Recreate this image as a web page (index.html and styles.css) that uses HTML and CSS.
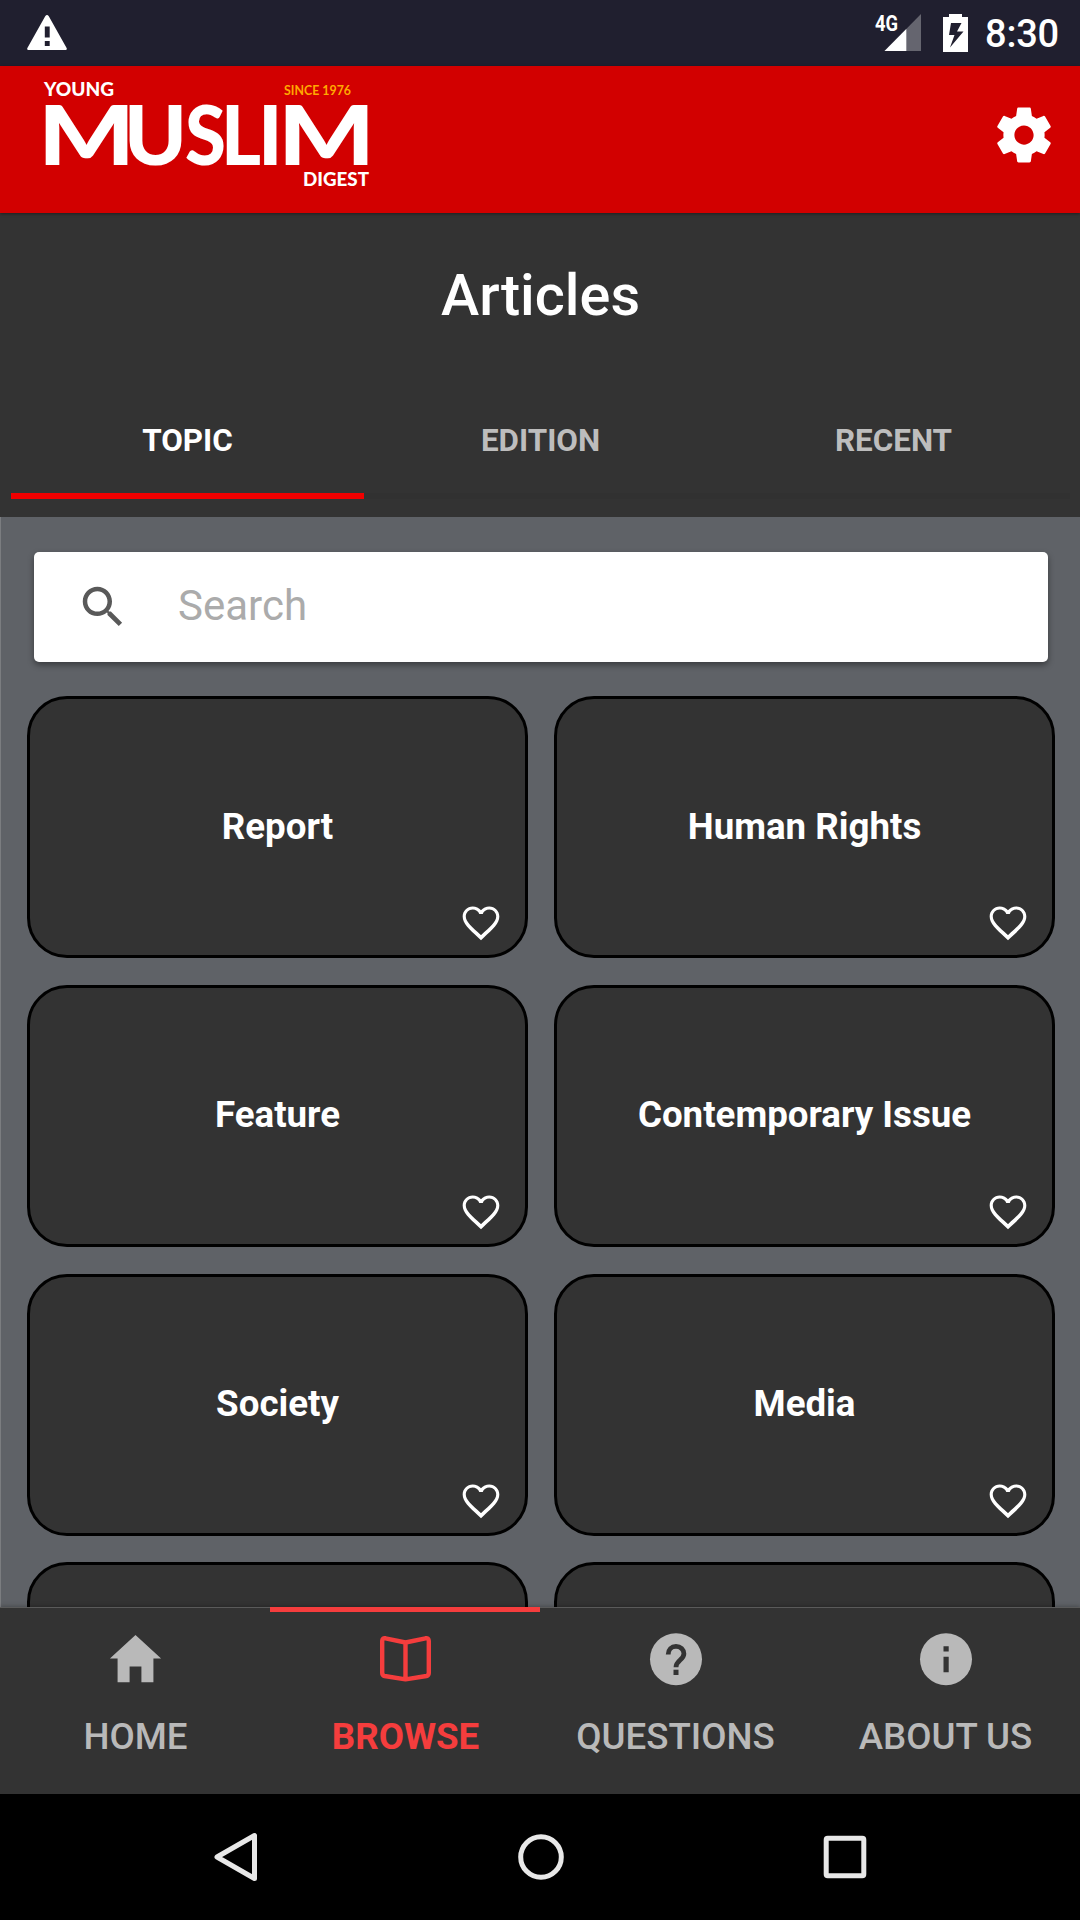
FILE: index.html
```html
<!DOCTYPE html>
<html lang="en">
<head>
<meta charset="utf-8">
<title>Young Muslim Digest</title>
<link rel="stylesheet" href="styles.css">
</head>
<body>
<svg class="defs" aria-hidden="true">
  <symbol id="heart" viewBox="0 0 24 24"><path d="M16.5 3c-1.74 0-3.41.81-4.5 2.09C10.91 3.81 9.24 3 7.5 3 4.42 3 2 5.42 2 8.5c0 3.78 3.4 6.86 8.55 11.54L12 21.35l1.45-1.32C18.6 15.36 22 12.28 22 8.5 22 5.42 19.58 3 16.5 3zm-4.4 15.55l-.1.1-.1-.1C7.14 14.24 3.7 11.39 3.7 8.5c0-2 1.6-3.8 3.8-3.8 1.54 0 3.04.99 3.57 2.36h1.87C13.46 5.69 14.96 4.7 16.5 4.7c2.2 0 3.8 1.8 3.8 3.8 0 2.89-3.44 5.74-8.2 10.05z"/></symbol>
</svg>
<div class="screen">
  <div class="status">
    <svg class="warn" width="40" height="36" viewBox="0 0 40 36"><path fill="#fff" fill-rule="evenodd" d="M18.200 1.300Q20-1.300 21.800 1.300L39.600 33Q40.400 35 38.500 35H1.500Q-.4 35 .4 33ZM17.800 11.500V22.500H22.700V11.500ZM17.800 26V31H22.700V26Z"/></svg>
    <div class="status-right">
      <svg class="signal" width="46" height="38" viewBox="0 0 46 38"><path fill="#65656f" d="M46 0V37H9.500Z"/><path fill="#fff" d="M31.300 15V37H9.500Z"/><text class="net" x="0" y="17" textLength="23" lengthAdjust="spacingAndGlyphs">4G</text></svg>
      <svg width="25" height="38" viewBox="0 0 25 38"><path fill="#fff" fill-rule="evenodd" d="M6 0H19V3H25V38H0V3H6ZM8 9L6 21H11.500L7 33.500L20.500 17.500H14L18.500 9Z"/></svg>
      <span class="time">8:30</span>
    </div>
  </div>
  <header class="appbar">
    <svg class="logo" width="340" height="120" viewBox="0 0 340 120">
      <text class="logo-small" x="0" y="22" textLength="70" lengthAdjust="spacingAndGlyphs">YOUNG</text>
      <text class="logo-since" x="240" y="20.500" textLength="67" lengthAdjust="spacingAndGlyphs">SINCE 1976</text>
      <text class="logo-big" y="90.500"><tspan x="-6" textLength="97" lengthAdjust="spacingAndGlyphs">M</tspan><tspan x="80" textLength="63" lengthAdjust="spacingAndGlyphs">U</tspan><tspan x="141" textLength="41" lengthAdjust="spacingAndGlyphs">S</tspan><tspan x="177" textLength="40" lengthAdjust="spacingAndGlyphs">L</tspan><tspan x="214">I</tspan><tspan x="234" textLength="97" lengthAdjust="spacingAndGlyphs">M</tspan></text>
      <text class="logo-small" x="259" y="112" textLength="66" lengthAdjust="spacingAndGlyphs">DIGEST</text>
    </svg>
    <svg class="gear" width="66" height="66" viewBox="0 0 24 24"><path fill="#fff" d="M19.430 12.980c.04-.32.070-.64.070-.98s-.03-.66-.07-.98l2.110-1.650c.19-.15.240-.42.120-.64l-2-3.460c-.12-.22-.39-.3-.61-.22l-2.490 1c-.52-.4-1.080-.73-1.690-.98l-.38-2.650C14.460 2.180 14.250 2 14 2h-4c-.25 0-.46.180-.49.420l-.38 2.650c-.61.250-1.170.59-1.690.98l-2.490-1c-.23-.09-.49 0-.61.220l-2 3.460c-.13.220-.07.490.120.640l2.110 1.650c-.04.320-.07.650-.07.980s.03.660.070.980l-2.110 1.650c-.19.150-.24.420-.12.640l2 3.460c.12.220.39.300.610.220l2.490-1c.52.400 1.080.730 1.690.980l.38 2.650c.03.240.240.420.490.420h4c.25 0 .46-.18.490-.42l.38-2.650c.61-.25 1.170-.59 1.690-.98l2.490 1c.23.090.49 0 .61-.22l2-3.460c.12-.22.070-.49-.12-.64l-2.110-1.650zM12 15.500c-1.930 0-3.500-1.570-3.500-3.500s1.570-3.500 3.500-3.500 3.500 1.570 3.500 3.500-1.570 3.500-3.500 3.500z"/></svg>
  </header>
  <div class="titlebar">
    <h1>Articles</h1>
    <div class="tabs"><div class="tab on">TOPIC</div><div class="tab">EDITION</div><div class="tab">RECENT</div></div>
  </div>
  <main class="content">
    <div class="search">
      <svg width="54" height="54" viewBox="0 0 24 24"><path fill="#595959" d="M15.500 14h-.79l-.28-.27C15.410 12.590 16 11.110 16 9.500 16 5.910 13.090 3 9.500 3S3 5.910 3 9.500 5.910 16 9.500 16c1.610 0 3.090-.59 4.230-1.570l.27.280v.79l5 4.990L20.490 19l-4.990-5zm-6 0C7.010 14 5 11.990 5 9.500S7.010 5 9.500 5 14 7.010 14 9.500 11.990 14 9.500 14z"/></svg>
      <span>Search</span>
    </div>
    <div class="grid">
      <div class="card">Report<svg class="heart"><use href="#heart"/></svg></div>
      <div class="card">Human Rights<svg class="heart"><use href="#heart"/></svg></div>
      <div class="card">Feature<svg class="heart"><use href="#heart"/></svg></div>
      <div class="card">Contemporary Issue<svg class="heart"><use href="#heart"/></svg></div>
      <div class="card">Society<svg class="heart"><use href="#heart"/></svg></div>
      <div class="card">Media<svg class="heart"><use href="#heart"/></svg></div>
      <div class="card"></div>
      <div class="card"></div>
    </div>
  </main>
  <nav class="nav">
    <div class="item"><svg width="63" height="63" viewBox="0 0 512 512"><path fill="currentColor" d="M208 440V312h96v128h97.600V248H464L256 56 48 248h62.400v192z"/></svg><span>HOME</span></div>
    <div class="item on"><svg width="63" height="63" viewBox="0 1 63 63"><path fill="none" stroke="currentColor" stroke-width="4.400" stroke-linejoin="round" d="M31.500 15.500L11.500 11.300Q8.200 10.800 8.200 14V46Q8.200 48.400 10.500 49L31.500 52.300L52.500 49Q54.800 48.400 54.800 46V14Q54.800 10.800 51.500 11.300L31.500 15.500V52.300"/></svg><span>BROWSE</span></div>
    <div class="item"><svg width="63" height="63" viewBox="0 0 63 63"><circle cx="32" cy="31.200" r="26" fill="currentColor"/><path fill="none" stroke="#333" stroke-width="4.800" d="M24.200 26.500C24.200 21.600 27.500 18.400 32 18.400S39.900 21.600 39.900 25.800C39.900 31.800 32 32.500 32 39.300"/><path fill="#333" d="M29.500 41.700h5v5.300h-5z"/></svg><span>QUESTIONS</span></div>
    <div class="item"><svg width="63" height="63" viewBox="0 0 63 63"><circle cx="32" cy="31.200" r="26" fill="currentColor"/><path fill="#333" d="M29.500 18.200h5.200v5.200h-5.200zM29.500 28.700h5.200v15.500h-5.200z"/></svg><span>ABOUT US</span></div>
  </nav>
  <div class="sysnav">
    <svg width="54" height="54" viewBox="0 0 54 54"><path d="M45.500 5.500V48.500L8 27Z"/></svg>
    <svg width="54" height="54" viewBox="0 0 54 54"><circle cx="27" cy="27" r="20.300"/></svg>
    <svg width="54" height="54" viewBox="0 0 54 54"><rect x="8.200" y="8.200" width="37.600" height="37.600" rx="1.500"/></svg>
  </div>
</div>
</body>
</html>
```
FILE: styles.css
```css
* { box-sizing: border-box; }
body { margin: 0; font-family: Roboto, "Liberation Sans", sans-serif; background: #000; }
.defs { display: none; }
svg { display: block; flex: none; }
.screen { width: 1080px; height: 1920px; display: flex; flex-direction: column; overflow: hidden; color: #fff; }

.status { height: 66px; flex: none; background: #201f2f; display: flex; justify-content: space-between; align-items: flex-start; padding: 14px 21px 0 27px; }
.warn { margin-top: 1px; }
.status-right { display: flex; gap: 22px; }
.signal { overflow: visible; }
.net { font: 700 22px Roboto, sans-serif; fill: #fff; }
.time { font-size: 38px; font-weight: 500; line-height: 40px; letter-spacing: -.2px; margin-left: -5px; }

.appbar { height: 147px; flex: none; background: #d20000; display: flex; justify-content: space-between; align-items: flex-start; padding: 8px 23px 0 44px; position: relative; box-shadow: 0 1px 3px rgba(0,0,0,.4); }
.logo { overflow: visible; }
.logo-small { font: 900 18px Lato, sans-serif; fill: #fff; }
.logo-since { font: 700 12.500px Lato, sans-serif; fill: #ffa800; }
.logo-big { font: 900 81px Lato, sans-serif; fill: #fff; }
.gear { margin-top: 28px; }

.titlebar { height: 304px; flex: none; background: #333; padding: 0 10px 0 11px; display: flex; flex-direction: column; }
h1 { margin: 0; font-size: 57.600px; font-weight: 500; line-height: 60px; padding-top: 53px; text-align: center; }
.tabs { display: flex; margin-top: 55px; }
.tab { flex: 1; height: 118px; text-align: center; line-height: 120px; font-size: 31.400px; font-weight: 700; color: #bdbdbd; border-bottom: 6px solid #313131; }
.tab.on { color: #fff; border-color: #f00000; }

.content { flex: 1; min-height: 0; overflow: hidden; background: #5f6267; border-left: 1px solid #7b7d80; padding: 35px 25px 0 26px; }
.search { height: 110px; margin: 0 7px; background: #fff; border-radius: 5px; display: flex; align-items: center; padding-left: 42px; gap: 48px; box-shadow: 0 3px 6px rgba(0,0,0,.4); color: #ababab; font-size: 42px; }
.search span { padding-bottom: 3px; }
.grid { display: grid; grid-template-columns: 1fr 1fr; column-gap: 26px; row-gap: 26.800px; grid-auto-rows: 262px; margin-top: 34px; }
.card { background: #333; border: 3px solid #000; border-radius: 40px; display: flex; align-items: center; justify-content: center; padding-bottom: 2px; font-size: 36.700px; font-weight: 700; position: relative; }
.heart { position: absolute; right: 22.500px; bottom: 10px; width: 44px; height: 44px; fill: #fff; }

.nav { height: 187px; flex: none; background: #333; border-top: 1px solid #5a5a5a; display: flex; position: relative; box-shadow: 0 -1px 4px rgba(0,0,0,.25); }
.item { flex: 1; display: flex; flex-direction: column; align-items: center; padding: 20px 0 0 1px; gap: 25px; color: #b9b9b9; font-size: 36.700px; font-weight: 500; line-height: 42px; }
.item.on { color: #f53d3d; font-weight: 700; margin-top: -1px; border-top: 5px solid #f53d3d; padding-top: 16px; }

.sysnav { height: 126px; flex: none; background: #000; display: flex; justify-content: space-between; padding: 36px 208px 0 209px; }
.sysnav svg { fill: none; stroke: #e8e8e8; stroke-width: 5; stroke-linejoin: round; }
```
